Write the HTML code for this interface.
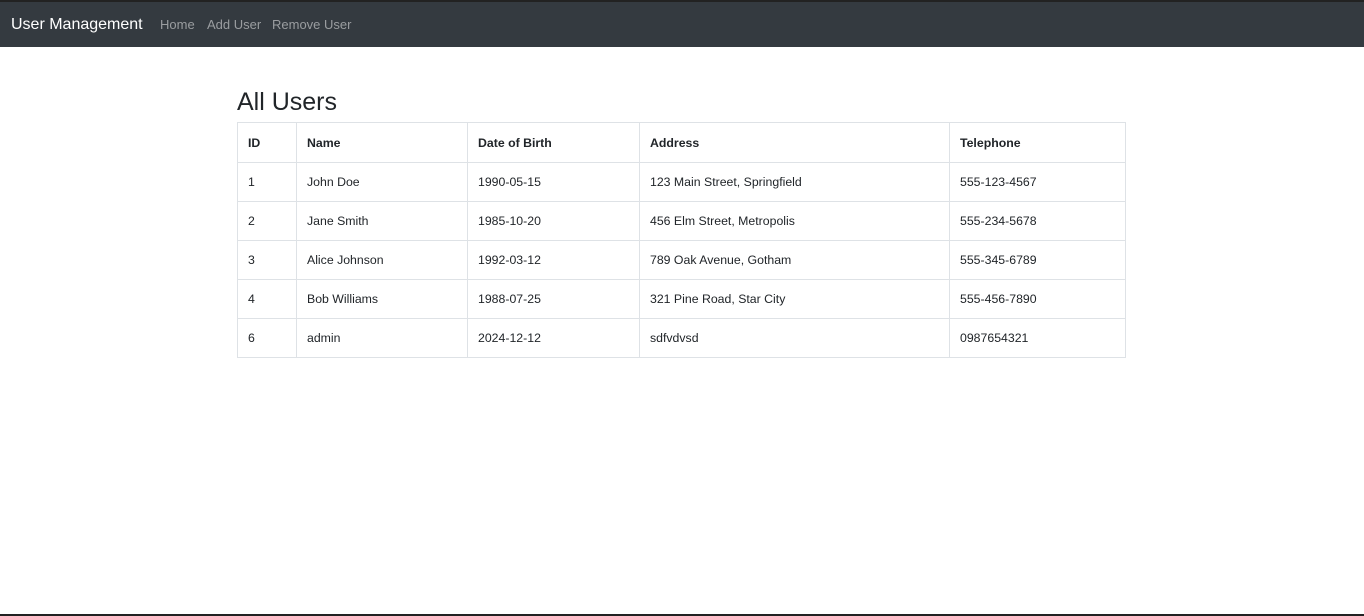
<!DOCTYPE html>
<html><head><style>
body{margin:0;width:1364px;height:616px;overflow:hidden;background:#fff;font-family:"Liberation Sans",sans-serif;color:#212529;position:relative}
.top{position:absolute;top:0;left:0;width:1364px;height:2px;background:#222}
nav{position:absolute;top:2px;left:0;width:1364px;height:45px;background:#343a40}
.brand{position:absolute;left:11px;top:14px;color:#fff;font-size:16px}
.l{position:absolute;top:15px;color:#9a9da0;font-size:13px}
h1{position:absolute;left:237px;top:88px;margin:0;font-size:25px;font-weight:500}
table{position:absolute;left:237px;top:122px;border-collapse:collapse;font-size:12.3px;table-layout:fixed;width:888px}
td,th{border:1px solid #dee2e6;padding:0 10px;text-align:left;height:38.1px}
th{font-weight:bold;height:39px}
.bot{position:absolute;bottom:0;left:0;width:1364px;height:2px;background:#222}
</style></head><body>
<div class="top"></div>
<nav><span class="brand">User Management</span><span class="l" style="left:160px">Home</span><span class="l" style="left:207px">Add User</span><span class="l" style="left:272px">Remove User</span></nav>
<h1>All Users</h1>
<table>
<colgroup><col style="width:59px"><col style="width:171px"><col style="width:172px"><col style="width:310px"><col style="width:176px"></colgroup>
<tr><th>ID</th><th>Name</th><th>Date of Birth</th><th>Address</th><th>Telephone</th></tr>
<tr><td>1</td><td>John Doe</td><td>1990-05-15</td><td>123 Main Street, Springfield</td><td>555-123-4567</td></tr>
<tr><td>2</td><td>Jane Smith</td><td>1985-10-20</td><td>456 Elm Street, Metropolis</td><td>555-234-5678</td></tr>
<tr><td>3</td><td>Alice Johnson</td><td>1992-03-12</td><td>789 Oak Avenue, Gotham</td><td>555-345-6789</td></tr>
<tr><td>4</td><td>Bob Williams</td><td>1988-07-25</td><td>321 Pine Road, Star City</td><td>555-456-7890</td></tr>
<tr><td>6</td><td>admin</td><td>2024-12-12</td><td>sdfvdvsd</td><td>0987654321</td></tr>
</table>
<div class="bot"></div>
</body></html>
